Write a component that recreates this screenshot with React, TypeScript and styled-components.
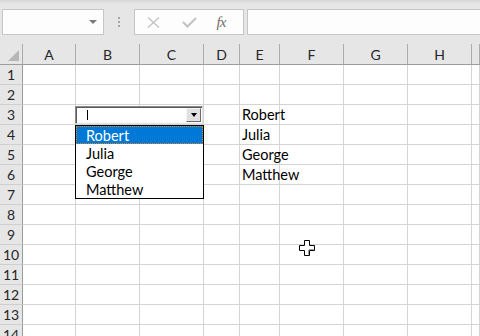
import React from 'react';
import styled, { createGlobalStyle } from 'styled-components';

const GlobalStyle = createGlobalStyle`
  html, body {
    margin: 0;
    padding: 0;
    background: #ffffff;
  }
  body {
    font-family: Lato, "Liberation Sans", sans-serif;
    overflow: hidden;
  }
`

// the last column only peeks in at the right edge, so its letter is off-screen
const COLUMNS = [
  { name: 'A', width: 53 },
  { name: 'B', width: 64 },
  { name: 'C', width: 64 },
  { name: 'D', width: 36 },
  { name: 'E', width: 40 },
  { name: 'F', width: 64 },
  { name: 'G', width: 64 },
  { name: 'H', width: 64 },
  { name: '', width: 8 },
];

const ROW_COUNT = 14;

const cellValues: Record<string, string> = {
  E3: 'Robert',
  E4: 'Julia',
  E5: 'George',
  E6: 'Matthew',
};

const names = ['Robert', 'Julia', 'George', 'Matthew'];

const Window = styled.div`
  width: 480px;
  height: 336px;
  overflow: hidden;
  background: #ffffff;
`

const Toolbar = styled.div`
  height: 44px;
  box-sizing: border-box;
  display: flex;
  align-items: flex-start;
  padding: 9px 0 0 2px;
  background: linear-gradient(#d8d8d8 0, #e6e6e6 4px);
`

const NameBox = styled.div`
  width: 102px;
  height: 26px;
  box-sizing: border-box;
  border: 1px solid #c6c6c6;
  background: #fdfdfd;
  display: flex;
  align-items: center;
  justify-content: flex-end;
  padding-right: 6px;
`

const SmallArrow = styled.span`
  width: 0;
  height: 0;
  border-left: 4px solid transparent;
  border-right: 4px solid transparent;
  border-top: 4px solid #7a7a7a;
`

const Grip = styled.div`
  width: 30px;
  height: 26px;
  display: flex;
  flex-direction: column;
  align-items: center;
  justify-content: center;
  gap: 2px;
`

const GripDot = styled.span`
  width: 2px;
  height: 2px;
  background: #a6a6a6;
`

const FxBox = styled.div`
  width: 110px;
  height: 26px;
  box-sizing: border-box;
  border: 1px solid #c6c6c6;
  background: #fdfdfd;
  display: grid;
  grid-template-columns: 36px 36px 1fr;
  align-items: center;
  justify-items: center;
`

const FxText = styled.span`
  font-family: "Liberation Serif", serif;
  font-style: italic;
  font-size: 15px;
  color: #6e6e6e;
  letter-spacing: -1px;
  padding-right: 8px;
`

const FormulaInput = styled.div`
  flex: 1;
  height: 26px;
  box-sizing: border-box;
  margin: 0 -2px 0 3px;
  border: 1px solid #c6c6c6;
  background: #fdfdfd;
`

const Sheet = styled.div`
  position: relative;
`

const Grid = styled.div`
  display: grid;
  grid-template-columns: 23px ${COLUMNS.map((c) => c.width + 'px').join(' ')};
  grid-template-rows: 21px;
  grid-auto-rows: 20px;
`

const Corner = styled.div`
  background: #e6e6e6;
  border-right: 1px solid #ababab;
  border-bottom: 1px solid #9b9b9b;
  position: relative;
  &::after {
    content: '';
    position: absolute;
    right: 3px;
    bottom: 3px;
    border-left: 11px solid transparent;
    border-bottom: 11px solid #b6b6b6;
  }
`

const ColHeader = styled.div`
  background: #e6e6e6;
  border-right: 1px solid #ababab;
  border-bottom: 1px solid #9b9b9b;
  display: flex;
  align-items: center;
  justify-content: center;
  font-size: 14px;
  color: #262626;
  padding-top: 1px;
`

const RowHeader = styled.div`
  background: #e6e6e6;
  border-right: 1px solid #9b9b9b;
  border-bottom: 1px solid #cfcfcf;
  display: flex;
  align-items: center;
  justify-content: center;
  font-size: 14px;
  color: #262626;
`

const Cell = styled.div`
  border-right: 1px solid #d4d4d4;
  border-bottom: 1px solid #d4d4d4;
  display: flex;
  align-items: center;
  padding-left: 2px;
  font-size: 14.5px;
  color: #000000;
  white-space: nowrap;
  overflow: visible;
`

const Combo = styled.div`
  position: absolute;
  left: 75px;
  top: 62px;
  width: 128px;
  height: 18px;
  box-sizing: border-box;
  border: 1px solid;
  border-color: #8a8a8a #e3e3e3 #e3e3e3 #8a8a8a;
  box-shadow: inset 1px 1px 0 #5a5a5a;
  background: #ffffff;
  display: flex;
  align-items: center;
  justify-content: space-between;
  padding: 0 1px 0 11px;
`

const Caret = styled.span`
  width: 1px;
  height: 10px;
  background: #000000;
`

const DropButton = styled.span`
  width: 15px;
  height: 14px;
  box-sizing: border-box;
  background: #e1e1e1;
  border: 1px solid;
  border-color: #f4f4f4 #6a6a6a #6a6a6a #f4f4f4;
  display: flex;
  align-items: center;
  justify-content: center;
`

const BlackArrow = styled.span`
  width: 0;
  height: 0;
  border-left: 3.5px solid transparent;
  border-right: 3.5px solid transparent;
  border-top: 4px solid #000000;
`

const List = styled.ul`
  position: absolute;
  left: 75px;
  top: 81px;
  width: 129px;
  box-sizing: border-box;
  margin: 0;
  padding: 0;
  list-style: none;
  background: #ffffff;
  border: 1px solid #000000;
`

const Item = styled.li<{ $selected?: boolean }>`
  height: 18px;
  box-sizing: border-box;
  display: flex;
  align-items: center;
  padding-left: 10px;
  font-size: 14.5px;
  color: ${(p) => (p.$selected ? '#ffffff' : '#000000')};
  background: ${(p) => (p.$selected ? '#0078d7' : 'transparent')};
  outline: ${(p) => (p.$selected ? '1px dotted #e08a00' : 'none')};
  outline-offset: -1px;
`

const Pointer = styled.svg`
  position: absolute;
  left: 299px;
  top: 196px;
`

const XIcon = () => (
  <svg width="13" height="11" viewBox="0 0 13 11">
    <path d="M1 0.5 L12 10.5 M12 0.5 L1 10.5" stroke="#c2c2c2" strokeWidth="1.3" fill="none" />
  </svg>
);

const CheckIcon = () => (
  <svg width="15" height="11" viewBox="0 0 15 11">
    <path d="M1 5 L5.5 9.5 L14 1" stroke="#c2c2c2" strokeWidth="2" fill="none" />
  </svg>
);

const App = () => {
  const rows = Array.from({ length: ROW_COUNT }, (_, i) => i + 1);

  return (
    <Window>
      <GlobalStyle />
      <Toolbar>
        <NameBox>
          <SmallArrow />
        </NameBox>
        <Grip>
          <GripDot />
          <GripDot />
          <GripDot />
        </Grip>
        <FxBox>
          <XIcon />
          <CheckIcon />
          <FxText>fx</FxText>
        </FxBox>
        <FormulaInput />
      </Toolbar>
      <Sheet>
        <Grid>
          <Corner />
          {COLUMNS.map((c, i) => (
            <ColHeader key={i}>{c.name}</ColHeader>
          ))}
          {rows.map((r) => (
            <React.Fragment key={r}>
              <RowHeader>{r}</RowHeader>
              {COLUMNS.map((c, i) => (
                <Cell key={i}>{cellValues[c.name + r]}</Cell>
              ))}
            </React.Fragment>
          ))}
        </Grid>
        <Combo>
          <Caret />
          <DropButton>
            <BlackArrow />
          </DropButton>
        </Combo>
        <List>
          {names.map((n, i) => (
            <Item key={n} $selected={i === 0}>{n}</Item>
          ))}
        </List>
        <Pointer width="16" height="16" viewBox="0 0 16 16">
          <path
            d="M5.5 0.5 H10.5 V5.5 H15.5 V10.5 H10.5 V15.5 H5.5 V10.5 H0.5 V5.5 H5.5 Z"
            fill="#ffffff"
            stroke="#000000"
            strokeWidth="1"
          />
          <path d="M9.5 10 V14.5 M10 9.5 H14.5" stroke="#9a9a9a" strokeWidth="1" />
        </Pointer>
      </Sheet>
    </Window>
  );
};

export default App;
